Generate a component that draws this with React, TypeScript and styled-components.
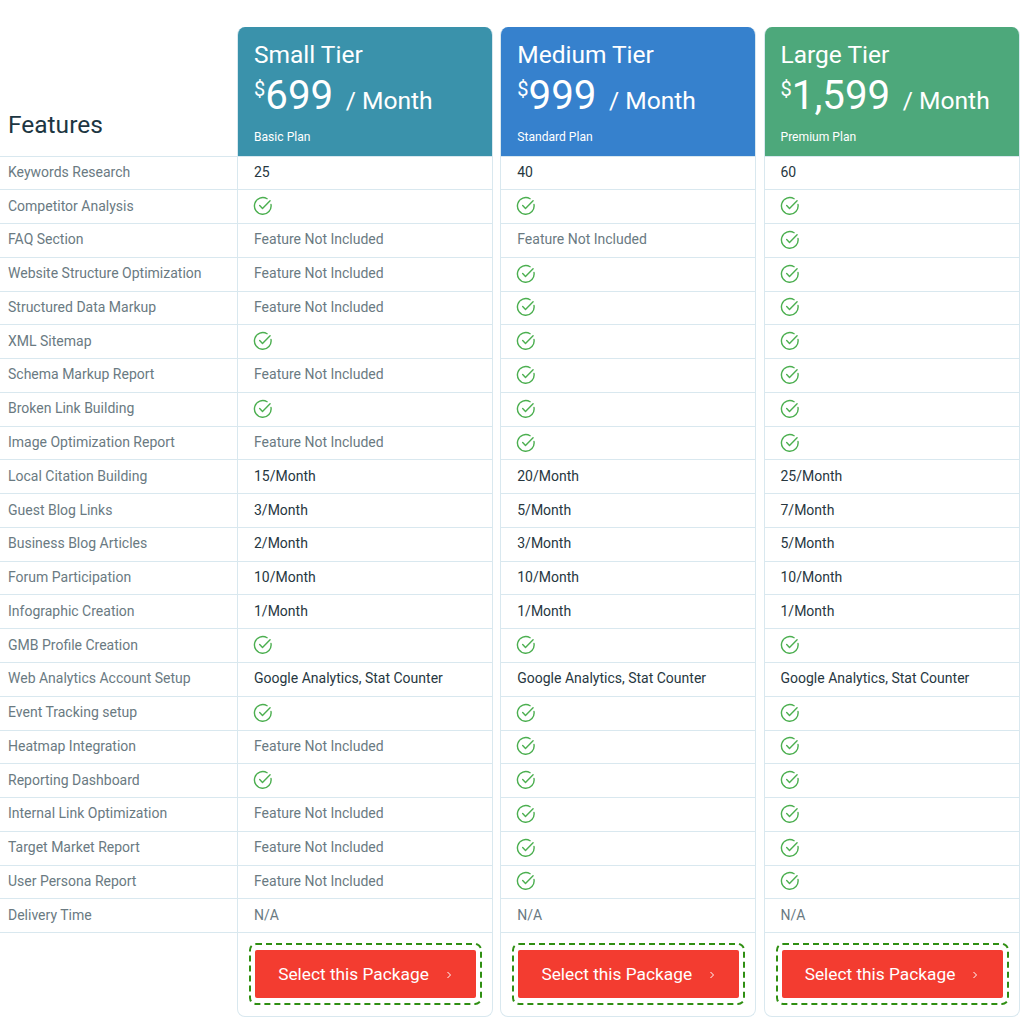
import * as React from 'react'
import styled, { createGlobalStyle } from 'styled-components'

const ROW_HEIGHT = 33.78;
const HEADER_HEIGHT = 129.5;

type CellValue = string | boolean;

interface Tier {
  name: string,
  price: string,
  plan: string,
  color: string,
  values: CellValue[],
}

const NO = 'Feature Not Included';

const FEATURES = [
  'Keywords Research',
  'Competitor Analysis',
  'FAQ Section',
  'Website Structure Optimization',
  'Structured Data Markup',
  'XML Sitemap',
  'Schema Markup Report',
  'Broken Link Building',
  'Image Optimization Report',
  'Local Citation Building',
  'Guest Blog Links',
  'Business Blog Articles',
  'Forum Participation',
  'Infographic Creation',
  'GMB Profile Creation',
  'Web Analytics Account Setup',
  'Event Tracking setup',
  'Heatmap Integration',
  'Reporting Dashboard',
  'Internal Link Optimization',
  'Target Market Report',
  'User Persona Report',
  'Delivery Time',
];

const ANALYTICS = 'Google Analytics, Stat Counter';

const TIERS: Tier[] = [
  {
    name: 'Small Tier',
    price: '699',
    plan: 'Basic Plan',
    color: '#3a92ab',
    values: ['25', true, NO, NO, NO, true, NO, true, NO, '15/Month', '3/Month', '2/Month', '10/Month', '1/Month', true, ANALYTICS, true, NO, true, NO, NO, NO, 'N/A'],
  },
  {
    name: 'Medium Tier',
    price: '999',
    plan: 'Standard Plan',
    color: '#3681cd',
    values: ['40', true, NO, true, true, true, true, true, true, '20/Month', '5/Month', '3/Month', '10/Month', '1/Month', true, ANALYTICS, true, true, true, true, true, true, 'N/A'],
  },
  {
    name: 'Large Tier',
    price: '1,599',
    plan: 'Premium Plan',
    color: '#4da87b',
    values: ['60', true, true, true, true, true, true, true, true, '25/Month', '7/Month', '5/Month', '10/Month', '1/Month', true, ANALYTICS, true, true, true, true, true, true, 'N/A'],
  },
];

const GlobalStyle = createGlobalStyle`
  html, body {
    margin: 0;
    padding: 0;
    background: #fff;
    font-family: Roboto, "Liberation Sans", sans-serif;
  }
  * {
    box-sizing: border-box;
  }
`;

const Page = styled.div`
  width: 1024px;
  height: 1024px;
  padding: 27px 4.5px 8px 0;
  display: flex;
  align-items: flex-start;
  overflow: hidden;
`;

const FeatureColumn = styled.div`
  width: 237px;
  flex: none;
`;

const FeatureHeading = styled.div`
  height: ${HEADER_HEIGHT}px;
  padding: 0 8px 16px;
  display: flex;
  align-items: flex-end;
  font-size: 24.5px;
  line-height: 30px;
  color: #1d3642;
  border-bottom: 1px solid #d9e8ef;
`;

const FeatureRow = styled.div`
  height: ${ROW_HEIGHT}px;
  padding: 0 8px 2px;
  display: flex;
  align-items: center;
  font-size: 14px;
  color: #6a7a82;
  border-bottom: 1px solid #d9e8ef;
`;

const TierCard = styled.div`
  flex: 1 1 0;
  margin-right: 7.25px;
  border: 1px solid #d9e8ef;
  border-top: none;
  border-radius: 8px;
  overflow: hidden;

  &:last-child {
    margin-right: 0;
  }
`;

const TierHeader = styled.div<{ $color: string }>`
  height: ${HEADER_HEIGHT}px;
  margin: 0 -1px;
  padding: 13px 16px 0 17px;
  color: #fff;
  background: ${(props) => props.$color};
  border-bottom: 1px solid #d9e8ef;
`;

const TierName = styled.div`
  font-size: 24.5px;
  line-height: 30px;
`;

const PriceLine = styled.div`
  display: flex;
  align-items: baseline;
  height: 46px;
  margin-top: 3px;
`;

const Dollar = styled.span`
  align-self: flex-start;
  font-size: 20px;
  line-height: 20px;
  margin-top: 6px;
`;

const Amount = styled.span`
  font-size: 40.3px;
  line-height: 46px;
`;

const Period = styled.span`
  margin-left: 12.5px;
  font-size: 24.6px;
`;

const PlanName = styled.div`
  margin-top: 10px;
  font-size: 12.1px;
  line-height: 16px;
`;

const ValueRow = styled.div<{ $muted: boolean }>`
  height: ${ROW_HEIGHT}px;
  padding: 0 16px 2px;
  display: flex;
  align-items: center;
  font-size: 14px;
  color: ${(props) => (props.$muted ? '#6a7a82' : '#27373f')};
  border-bottom: 1px solid #d9e8ef;
`;

const ButtonCell = styled.div`
  height: 83px;
  padding: 10px 10px 0 11px;
`;

const DashedFrame = styled.div`
  height: 62px;
  padding: 5px 4px;
  border: 2px dashed #2f8f12;
  border-radius: 7px;
`;

const SelectButton = styled.button`
  width: 100%;
  height: 100%;
  display: flex;
  align-items: center;
  justify-content: center;
  gap: 16px;
  border: none;
  border-radius: 2px;
  padding: 0;
  background: #f33c30;
  color: #fff;
  font-family: inherit;
  font-size: 17.3px;
`;

const Chevron = styled.svg`
  width: 8px;
  height: 10px;
  margin-top: 1px;
`;

const CheckSvg = styled.svg`
  width: 20px;
  height: 20px;
  margin: 1px 0 0 -1px;
`;

const CheckIcon = () => (
  <CheckSvg viewBox="0 0 24 24" fill="none" stroke="#4caf50" strokeWidth="1.7" strokeLinecap="round" strokeLinejoin="round">
    <path d="M21.6 10.2a10 10 0 1 1-4.7-6.9" />
    <path d="M8 11.5l3.4 3.4L20.5 5.6" />
  </CheckSvg>
);

const isMuted = (value: CellValue) => value === NO || value === 'N/A';

const TierColumn = ({ tier }: { tier: Tier }) => (
  <TierCard>
    <TierHeader $color={tier.color}>
      <TierName>{tier.name}</TierName>
      <PriceLine>
        <Dollar>$</Dollar>
        <Amount>{tier.price}</Amount>
        <Period>/ Month</Period>
      </PriceLine>
      <PlanName>{tier.plan}</PlanName>
    </TierHeader>
    {tier.values.map((value, i) => (
      <ValueRow key={i} $muted={isMuted(value)}>
        {value === true ? <CheckIcon /> : value}
      </ValueRow>
    ))}
    <ButtonCell>
      <DashedFrame>
        <SelectButton>
          Select this Package
          <Chevron viewBox="0 0 8 10" fill="none" stroke="#fff" strokeWidth="1">
            <path d="M2.5 2l3 3-3 3" />
          </Chevron>
        </SelectButton>
      </DashedFrame>
    </ButtonCell>
  </TierCard>
);

const App = () => (
  <Page>
    <GlobalStyle />
    <FeatureColumn>
      <FeatureHeading>Features</FeatureHeading>
      {FEATURES.map((feature) => (
        <FeatureRow key={feature}>{feature}</FeatureRow>
      ))}
    </FeatureColumn>
    {TIERS.map((tier) => (
      <TierColumn key={tier.name} tier={tier} />
    ))}
  </Page>
);

export default App
